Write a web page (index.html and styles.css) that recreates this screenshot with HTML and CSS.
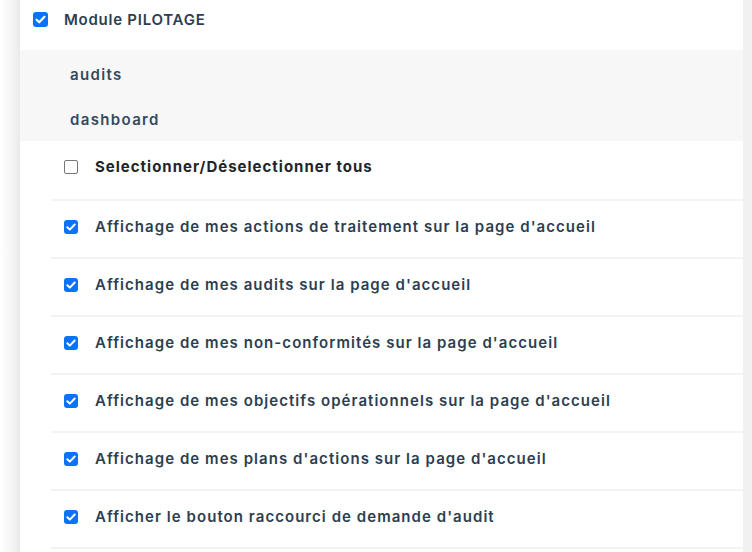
FILE: index.html
```html
<!DOCTYPE html>
<html lang="fr">
<head>
<meta charset="utf-8">
<link rel="stylesheet" href="styles.css">
</head>
<body>
<div class="page">
  <div class="panel">
    <div class="module">
      <span class="cb checked"><svg viewBox="0 0 14 14"><path d="M3.3 7.2 L5.8 9.6 L10.7 4.5" /></svg></span>
      <span class="module-title">Module PILOTAGE</span>
    </div>
    <div class="submenu">
      <div class="sub-item">audits</div>
      <div class="sub-item">dashboard</div>
    </div>
    <ul class="options">
      <li class="opt all"><span class="cb empty"></span><span class="label">Selectionner/Déselectionner tous</span></li>
      <li class="opt"><span class="cb checked"><svg viewBox="0 0 14 14"><path d="M3.3 7.2 L5.8 9.6 L10.7 4.5" /></svg></span><span class="label">Affichage de mes actions de traitement sur la page d'accueil</span></li>
      <li class="opt"><span class="cb checked"><svg viewBox="0 0 14 14"><path d="M3.3 7.2 L5.8 9.6 L10.7 4.5" /></svg></span><span class="label">Affichage de mes audits sur la page d'accueil</span></li>
      <li class="opt"><span class="cb checked"><svg viewBox="0 0 14 14"><path d="M3.3 7.2 L5.8 9.6 L10.7 4.5" /></svg></span><span class="label">Affichage de mes non-conformités sur la page d'accueil</span></li>
      <li class="opt"><span class="cb checked"><svg viewBox="0 0 14 14"><path d="M3.3 7.2 L5.8 9.6 L10.7 4.5" /></svg></span><span class="label">Affichage de mes objectifs opérationnels sur la page d'accueil</span></li>
      <li class="opt"><span class="cb checked"><svg viewBox="0 0 14 14"><path d="M3.3 7.2 L5.8 9.6 L10.7 4.5" /></svg></span><span class="label">Affichage de mes plans d'actions sur la page d'accueil</span></li>
      <li class="opt"><span class="cb checked"><svg viewBox="0 0 14 14"><path d="M3.3 7.2 L5.8 9.6 L10.7 4.5" /></svg></span><span class="label">Afficher le bouton raccourci de demande d'audit</span></li>
    </ul>
  </div>
</div>
</body>
</html>
```

FILE: styles.css
```css
* { box-sizing: border-box; }
html, body { margin: 0; padding: 0; }
body {
  background: #f1f1f1;
  font-family: "Inter", "Open Sans", sans-serif;
  color: #2c3e50;
  width: 752px;
  height: 552px;
  overflow: hidden;
}
.page {
  display: flex;
  height: 552px;
  background: linear-gradient(to right, #ffffff 0px, #f3f3f3 14px, #e9e9e9 20px, #f1f1f1 20px);
}
.panel {
  margin-left: 20px;
  width: 723px;
  background: #fff;
  height: 552px;
}
.module {
  display: flex;
  align-items: center;
  height: 50px;
  padding-left: 13px;
  padding-bottom: 12px;
}
.module .cb { width: 15px; height: 15px; }
.module-title {
  margin-left: 16px;
  font-size: 15px;
  font-weight: 600;
  letter-spacing: 0.75px;
}
.submenu {
  background: #f7f7f7;
  padding: 2px 0 0;
  height: 91px;
}
.sub-item {
  height: 45px;
  display: flex;
  align-items: center;
  padding-left: 50px;
  font-size: 15px;
  font-weight: 600;
  letter-spacing: 1.35px;
  color: #34495e;
}
.options {
  list-style: none;
  margin: 0 0 0 31px;
  padding: 0;
}
.opt {
  display: flex;
  align-items: center;
  height: 58px;
  border-bottom: 2px solid #f3f3f3;
  padding-left: 13px;
  padding-bottom: 5px;
}
.opt.all { height: 60px; padding-bottom: 7px; }
.cb {
  width: 14px;
  height: 14px;
  border-radius: 3px;
  flex: none;
  display: flex;
  align-items: center;
  justify-content: center;
}
.cb.checked { background: #0b73f7; }
.cb.empty { border: 1px solid #767676; border-radius: 2px; width: 14px; height: 14px; }
.cb svg { width: 100%; height: 100%; }
.cb svg path { fill: none; stroke: #fff; stroke-width: 2; stroke-linecap: round; stroke-linejoin: round; }
.label {
  margin-left: 17px;
  font-size: 15px;
  font-weight: 600;
  letter-spacing: 1.05px;
  color: #2c3e50;
}
.all .label { font-weight: 700; color: #212529; letter-spacing: 1px; }
```
